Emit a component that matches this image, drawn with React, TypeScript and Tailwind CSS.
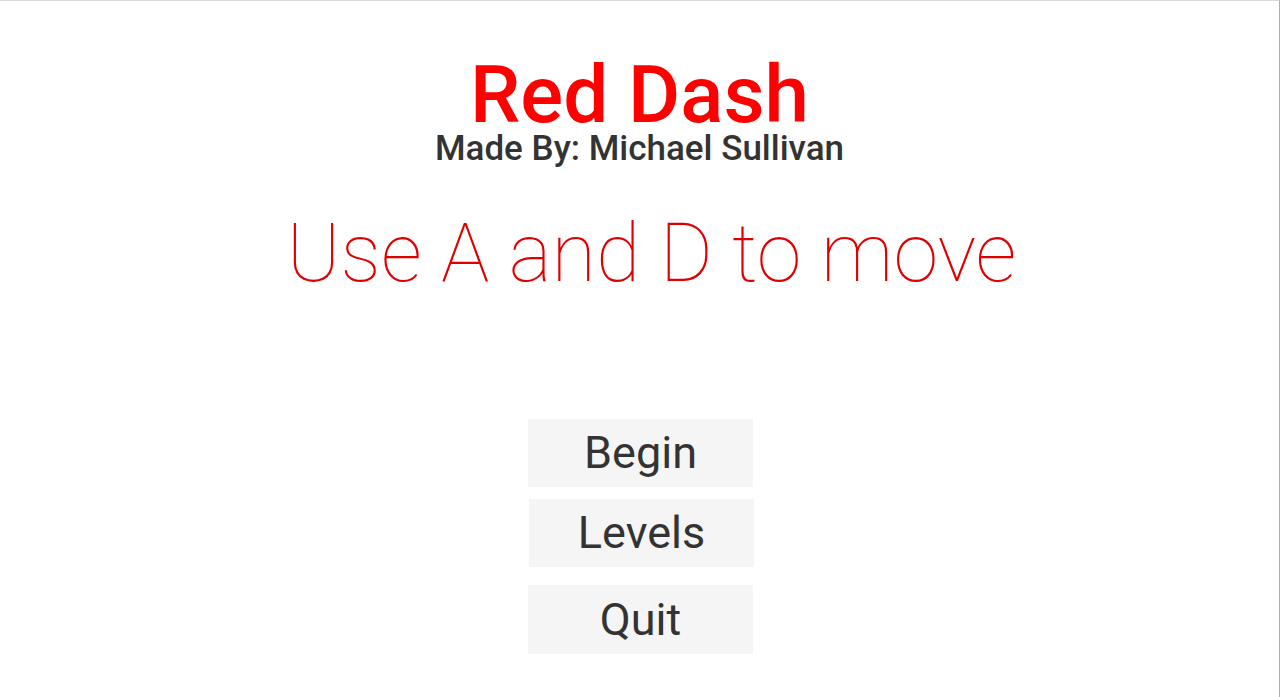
export default function App() {
  return (
    <div
      className="w-[1280px] h-[697px] bg-white border-t border-t-[#d9d9d9] border-r border-r-[#b0b0b0] flex flex-col items-center overflow-hidden"
      style={{ fontFamily: "Roboto, 'Noto Sans', sans-serif" }}
    >
      <h1 className="mt-[47px] text-[80px] leading-[74px] h-[74px] pt-[10px] box-content font-medium text-[#ff0000]">Red Dash</h1>
      <div className="text-[35px] leading-[34px] h-[34px] font-medium text-[#333333]">Made By: Michael Sullivan</div>
      <div className="mt-[40px] ml-[24px] text-[81px] leading-[95px] font-thin text-[#e00000]">Use A and D to move</div>
      <div className="mt-[118px] ml-[2px] flex flex-col items-center">
        <button className="w-[225px] h-[68px] bg-[#f5f5f5] text-[45px] text-[#333333] flex items-center justify-center">Begin</button>
        <button className="mt-[12px] ml-[2px] w-[225px] h-[68px] bg-[#f5f5f5] text-[45px] text-[#333333] flex items-center justify-center">Levels</button>
        <button className="mt-[18px] w-[225px] h-[69px] bg-[#f5f5f5] text-[45px] text-[#333333] flex items-center justify-center">Quit</button>
      </div>
    </div>
  );
}
